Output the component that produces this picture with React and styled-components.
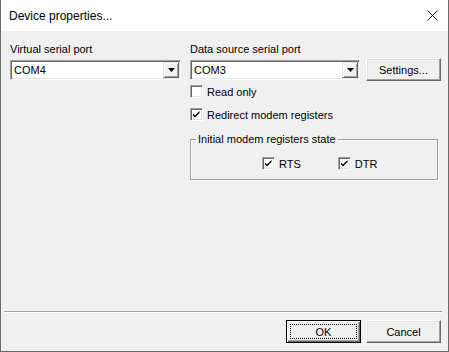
import React from "react";
import styled, { createGlobalStyle } from "styled-components";

const GlobalStyle = createGlobalStyle`
  html, body {
    margin: 0;
    padding: 0;
    background: #ffffff;
  }
  * {
    box-sizing: border-box;
  }
`;

const Window = styled.div`
  width: 449px;
  height: 352px;
  display: flex;
  flex-direction: column;
  border: 1px solid #6b6b6b;
  border-top: none;
  background: #f0f0f0;
  font-family: "Liberation Sans", Arial, sans-serif;
  font-size: 11px;
  color: #000;
`;

const TitleBar = styled.div`
  height: 31px;
  flex-shrink: 0;
  display: flex;
  align-items: center;
  justify-content: space-between;
  padding: 0 10px 0 8px;
  background: #ffffff;
  font-family: "Liberation Sans", Arial, sans-serif;
  font-size: 12px;
`;

const Body = styled.div`
  flex: 1;
  display: flex;
  flex-direction: column;
  padding: 11px 7px 8px 9px;
`;

const Top = styled.div`
  display: flex;
  gap: 9px;
`;

const Column = styled.div`
  display: flex;
  flex-direction: column;
  width: ${(p) => p.width}px;
`;

const Label = styled.div`
  line-height: 14px;
  height: 14px;
  margin-bottom: 2px;
`;

const Row = styled.div`
  display: flex;
  align-items: center;
  gap: ${(p) => p.gap || 0}px;
  height: 23px;
`;

const Combo = styled.div`
  width: ${(p) => p.width}px;
  height: 20px;
  display: flex;
  align-items: stretch;
  background: #fff;
  border: 1px solid;
  border-color: #a0a0a0 #ffffff #ffffff #a0a0a0;
  box-shadow: inset 1px 1px #696969, inset -1px -1px #e3e3e3;
  padding: 1px;
`;

const ComboText = styled.div`
  flex: 1;
  display: flex;
  align-items: center;
  padding-left: 2px;
`;

const ComboButton = styled.div`
  width: 16px;
  display: flex;
  align-items: center;
  justify-content: center;
  background: #f0f0f0;
  border: 1px solid;
  border-color: #e3e3e3 #696969 #696969 #e3e3e3;
  box-shadow: inset 1px 1px #fff, inset -1px -1px #a0a0a0;
`;

const Button = styled.div`
  width: ${(p) => p.width || 75}px;
  height: 23px;
  display: flex;
  align-items: center;
  justify-content: center;
  background: #f0f0f0;
  border: 1px solid;
  border-color: ${(p) =>
    p.primary ? "#000 #000 #000 #000" : "#fff #696969 #696969 #fff"};
  box-shadow: ${(p) =>
    p.primary
      ? "inset 1px 1px #fff, inset -1px -1px #696969, inset -2px -2px #a0a0a0"
      : "inset -1px -1px #a0a0a0, inset 1px 1px #e3e3e3"};
  position: relative;
`;

const FocusRect = styled.div`
  position: absolute;
  inset: 3px;
  border: 1px dotted #000;
`;

const CheckRow = styled.div`
  display: flex;
  align-items: center;
  gap: 4px;
  height: 13px;
  margin-top: ${(p) => p.mt || 0}px;
`;

const Box = styled.div`
  width: 13px;
  height: 13px;
  background: #fff;
  border: 1px solid;
  border-color: #a0a0a0 #ffffff #ffffff #a0a0a0;
  box-shadow: inset 1px 1px #696969, inset -1px -1px #e3e3e3;
  display: flex;
  align-items: center;
  justify-content: center;
`;

const Group = styled.fieldset`
  margin: 11px 0 0 0;
  width: 248px;
  padding: 0 0 9px 5px;
  border: 1px solid #a0a0a0;
  box-shadow: 1px 1px #fff, inset 1px 1px #fff;
  min-width: 0;
`;

const Legend = styled.legend`
  padding: 0 2px;
  line-height: 14px;
`;

const GroupRow = styled.div`
  display: flex;
  gap: 37px;
  padding-left: 66px;
  margin-top: 11px;
`;

const Spacer = styled.div`
  flex: 1;
`;

const Separator = styled.div`
  height: 2px;
  margin: 0 -1px 0 -6px;
  border-top: 1px solid #a0a0a0;
  border-bottom: 1px solid #fff;
`;

const Footer = styled.div`
  display: flex;
  justify-content: flex-end;
  gap: 5px;
  margin-top: 7px;
`;

function Arrow() {
  return (
    <svg width="7" height="4" viewBox="0 0 7 4">
      <path d="M0 0h7L3.5 4z" fill="#000" />
    </svg>
  );
}

function CloseIcon() {
  return (
    <svg width="11" height="11" viewBox="0 0 11 11">
      <path d="M0.5 0.5L10.5 10.5M10.5 0.5L0.5 10.5" stroke="#111" strokeWidth="1" />
    </svg>
  );
}

function Tick() {
  return (
    <svg width="9" height="9" viewBox="0 0 9 9">
      <path d="M1 3.5l2 2 4.5-4.5v2L3 7.5 1 5.5z" fill="#000" />
    </svg>
  );
}

function Check({ checked, label, mt }) {
  return (
    <CheckRow mt={mt}>
      <Box>{checked && <Tick />}</Box>
      <span>{label}</span>
    </CheckRow>
  );
}

function ComboBox({ width, value }) {
  return (
    <Combo width={width}>
      <ComboText>{value}</ComboText>
      <ComboButton>
        <Arrow />
      </ComboButton>
    </Combo>
  );
}

export default function App() {
  return (
    <>
      <GlobalStyle />
      <Window>
        <TitleBar>
          <span>Device properties...</span>
          <CloseIcon />
        </TitleBar>
        <Body>
          <Top>
            <Column width={171}>
              <Label>Virtual serial port</Label>
              <Row>
                <ComboBox width={171} value="COM4" />
              </Row>
            </Column>
            <Column width={251}>
              <Label>Data source serial port</Label>
              <Row gap={6}>
                <ComboBox width={170} value="COM3" />
                <Button>Settings...</Button>
              </Row>
              <Check mt={4} label="Read only" />
              <Check mt={10} checked label="Redirect modem registers" />
              <Group>
                <Legend>Initial modem registers state</Legend>
                <GroupRow>
                  <Check checked label="RTS" />
                  <Check checked label="DTR" />
                </GroupRow>
              </Group>
            </Column>
          </Top>
          <Spacer />
          <Separator />
          <Footer>
            <Button primary>
              <FocusRect />
              OK
            </Button>
            <Button>Cancel</Button>
          </Footer>
        </Body>
      </Window>
    </>
  );
}
